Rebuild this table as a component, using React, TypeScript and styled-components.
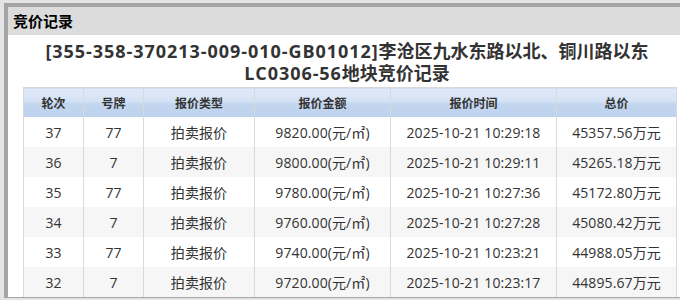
import React from 'react';
import styled, { createGlobalStyle } from 'styled-components';

const GlobalStyle = createGlobalStyle`
    html, body {
        margin: 0;
        padding: 0;
        background: #e4e4e4;
        overflow: hidden;
        font-family: "Open Sans", "Noto Sans CJK SC", sans-serif;
    }
    body {
        padding: 3px 0 0 4px;
    }
`;

const StyledPanel = styled.div`
    width: 678px;
    height: 290px;
    background: #fff;
    border-top: 4px solid #a5a5a5;
    border-left: 4px solid #a5a5a5;
    border-bottom: 1px solid #a5a5a5;
    display: flex;
    flex-direction: column;
    overflow: hidden;
`;

const StyledPanelHeader = styled.div`
    flex: none;
    height: 28px;
    background: #dcdcdc;
    padding-left: 5px;
    font-size: 15px;
    font-weight: bold;
    line-height: 27px;
    color: #000;
    font-family: "Noto Sans CJK SC", sans-serif;
`;

const StyledTitle = styled.h2`
    flex: none;
    margin: 0;
    padding: 5px 0 3px;
    text-align: center;
    font-size: 18px;
    line-height: 22px;
    font-weight: bold;
    color: #333;
`;

const StyledCode = styled.span`
    letter-spacing: 0.95px;
`;

const StyledTable = styled.table`
    flex: none;
    width: 647px;
    margin: 0 0 0 15px;
    border-collapse: collapse;
    table-layout: fixed;
    border: 1px solid #d8d8d8;
`;

const StyledHeadCell = styled.th<{ $width: number }>`
    width: ${(p) => p.$width}px;
    height: 29px;
    padding: 0;
    font-size: 12px;
    font-weight: bold;
    color: #333;
    border-left: 1px solid #d8d8d8;
    border-top: 1px solid #d8d8d8;
    background: linear-gradient(#e0eaf7 0%, #d4e2f4 45%, #c3d6ef 52%, #bdd2ee 100%);
    font-family: "Noto Sans CJK SC", sans-serif;
`;

const StyledRow = styled.tr<{ $odd: boolean }>`
    background: ${(p) => (p.$odd ? '#f6f6f6' : '#fff')};
`;

const StyledCell = styled.td`
    height: 30px;
    padding: 0;
    text-align: center;
    font-size: 14px;
    letter-spacing: 0.1px;
    color: #333;
    border-left: 1px solid #dadada;
`;

const columns = [
    { name: '轮次', width: 59 },
    { name: '号牌', width: 59 },
    { name: '报价类型', width: 110 },
    { name: '报价金额', width: 135 },
    { name: '报价时间', width: 165 },
    { name: '总价', width: 119 },
];

const records = [
    ['37', '77', '拍卖报价', '9820.00(元/㎡)', '2025-10-21 10:29:18', '45357.56万元'],
    ['36', '7', '拍卖报价', '9800.00(元/㎡)', '2025-10-21 10:29:11', '45265.18万元'],
    ['35', '77', '拍卖报价', '9780.00(元/㎡)', '2025-10-21 10:27:36', '45172.80万元'],
    ['34', '7', '拍卖报价', '9760.00(元/㎡)', '2025-10-21 10:27:28', '45080.42万元'],
    ['33', '77', '拍卖报价', '9740.00(元/㎡)', '2025-10-21 10:23:21', '44988.05万元'],
    ['32', '7', '拍卖报价', '9720.00(元/㎡)', '2025-10-21 10:23:17', '44895.67万元'],
];

export default function App() {
    return (
        <>
            <GlobalStyle />
            <StyledPanel>
                <StyledPanelHeader>竞价记录</StyledPanelHeader>
                <StyledTitle>
                    <StyledCode>[355-358-370213-009-010-GB01012]</StyledCode>李沧区九水东路以北、铜川路以东
                    <br />
                    <StyledCode>LC0306-56</StyledCode>地块竞价记录
                </StyledTitle>
                <StyledTable>
                    <thead>
                        <tr>
                            {columns.map((c) => (
                                <StyledHeadCell key={c.name} $width={c.width}>
                                    {c.name}
                                </StyledHeadCell>
                            ))}
                        </tr>
                    </thead>
                    <tbody>
                        {records.map((r, i) => (
                            <StyledRow key={r[0]} $odd={i % 2 === 1}>
                                {r.map((v, j) => (
                                    <StyledCell key={j}>{v}</StyledCell>
                                ))}
                            </StyledRow>
                        ))}
                    </tbody>
                </StyledTable>
            </StyledPanel>
        </>
    );
}
